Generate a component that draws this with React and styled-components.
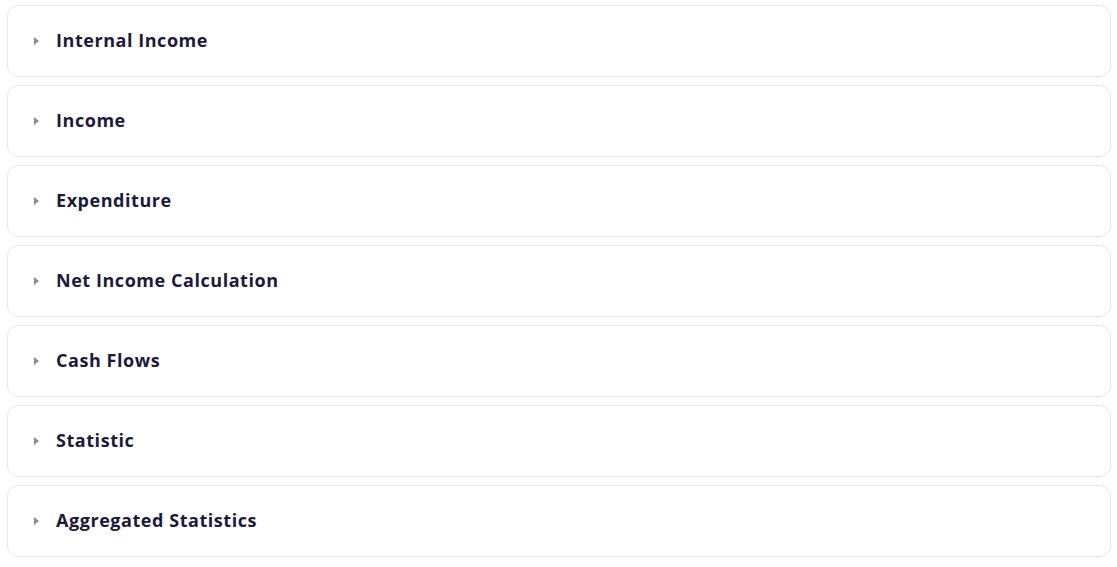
import { useState } from 'react'
import styled, { createGlobalStyle } from 'styled-components'

const GlobalStyle = createGlobalStyle`
    body {
        margin: 0;
        background: #ffffff;
        font-family: "Open Sans", "Liberation Sans", sans-serif;
    }
`

const List = styled.div`
    display: flex;
    flex-direction: column;
    gap: 8px;
    padding: 5px 6px 0 7px;
`

const Card = styled.div`
    border: 1px solid #e6e7ee;
    border-radius: 11px;
    background: #fff;
`

const Header = styled.button`
    display: flex;
    align-items: center;
    gap: 17px;
    width: 100%;
    height: 70px;
    padding: 0 0 0 26px;
    border: 0;
    background: transparent;
    cursor: pointer;
    text-align: left;
    &:focus{
        outline: none;
    }
`

const Caret = styled.span`
    width: 0;
    height: 0;
    border-top: 4px solid transparent;
    border-bottom: 4px solid transparent;
    border-left: 5px solid #8b8aa3;
    transform: rotate(${p => p.$open ? '90deg' : '0deg'});
    transition: transform .2s;
`

const Title = styled.span`
    font-family: "Open Sans", "Liberation Sans", sans-serif;
    font-size: 18px;
    font-weight: 700;
    color: #1b1a3b;
    letter-spacing: 0.55px;
    margin-top: -2px;
`

const Body = styled.div`
    padding: 0 26px 20px 56px;
    font-size: 14px;
    color: #5b5b70;
`

const sections = [
    "Internal Income",
    "Income",
    "Expenditure",
    "Net Income Calculation",
    "Cash Flows",
    "Statistic",
    "Aggregated Statistics",
]

const App = () => {
    const [open, setOpen] = useState(null)

    return (
        <>
            <GlobalStyle />
            <List>
                {sections.map((name, index) => (
                    <Card key={index}>
                        <Header onClick={() => setOpen(open === index ? null : index)}>
                            <Caret $open={open === index} />
                            <Title>{name}</Title>
                        </Header>
                        {open === index && <Body>No data available.</Body>}
                    </Card>
                ))}
            </List>
        </>
    )
}

export default App
